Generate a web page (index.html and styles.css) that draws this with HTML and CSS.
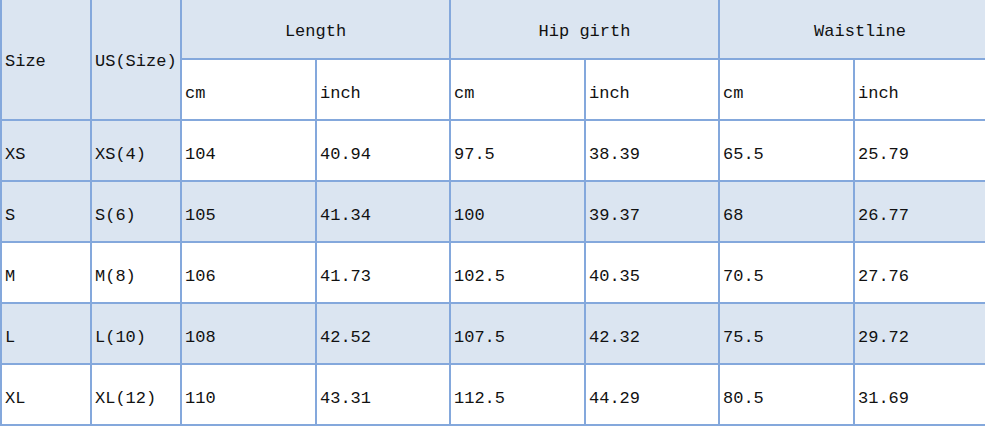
FILE: index.html
```html
<!DOCTYPE html>
<html>
<head>
<meta charset="utf-8">
<link rel="stylesheet" href="styles.css">
</head>
<body>
<table class="size-table">
  <colgroup>
    <col class="c1"><col class="c2"><col class="c3"><col class="c4"><col class="c5"><col class="c6"><col class="c7"><col class="c8">
  </colgroup>
  <tr class="head">
    <td rowspan="2" class="blue span">Size</td>
    <td rowspan="2" class="blue span">US(Size)</td>
    <td colspan="2" class="blue center">Length</td>
    <td colspan="2" class="blue center">Hip girth</td>
    <td colspan="2" class="blue center">Waistline</td>
  </tr>
  <tr class="sub">
    <td>cm</td><td>inch</td><td>cm</td><td>inch</td><td>cm</td><td>inch</td>
  </tr>
  <tr>
    <td class="blue">XS</td><td class="blue">XS(4)</td><td>104</td><td>40.94</td><td>97.5</td><td>38.39</td><td>65.5</td><td>25.79</td>
  </tr>
  <tr class="blue">
    <td>S</td><td>S(6)</td><td>105</td><td>41.34</td><td>100</td><td>39.37</td><td>68</td><td>26.77</td>
  </tr>
  <tr>
    <td>M</td><td>M(8)</td><td>106</td><td>41.73</td><td>102.5</td><td>40.35</td><td>70.5</td><td>27.76</td>
  </tr>
  <tr class="blue">
    <td>L</td><td>L(10)</td><td>108</td><td>42.52</td><td>107.5</td><td>42.32</td><td>75.5</td><td>29.72</td>
  </tr>
  <tr>
    <td>XL</td><td>XL(12)</td><td>110</td><td>43.31</td><td>112.5</td><td>44.29</td><td>80.5</td><td>31.69</td>
  </tr>
</table>
</body>
</html>
```
FILE: styles.css
```css
html, body {
  margin: 0;
  padding: 0;
  background: #ffffff;
  overflow: hidden;
}

.size-table {
  border-collapse: collapse;
  table-layout: fixed;
  width: 1000px;
  margin-top: -1px;
  font-family: "Liberation Mono", "DejaVu Sans Mono", monospace;
  font-size: 17px;
  color: #111111;
}

.c1 { width: 90px; }
.c2 { width: 90px; }
.c3 { width: 135px; }
.c4 { width: 134px; }
.c5 { width: 135px; }
.c6 { width: 134px; }
.c7 { width: 135px; }
.c8 { width: 147px; }

.size-table td {
  border: 2px solid #84a8dc;
  padding: 8px 0 0 3px;
  height: 61px;
  box-sizing: border-box;
  vertical-align: middle;
  white-space: nowrap;
  overflow: hidden;
}

.size-table tr:first-child td {
  border-top: none;
}

.size-table .head td {
  height: 60px;
}

.size-table .head td.span {
  padding-top: 4px;
}

.size-table .head td.center {
  text-align: center;
  padding: 6px 0 0 0;
}

.size-table .sub td {
  padding-top: 8px;
}

.blue,
.size-table td.blue {
  background: #dbe5f1;
}
```
